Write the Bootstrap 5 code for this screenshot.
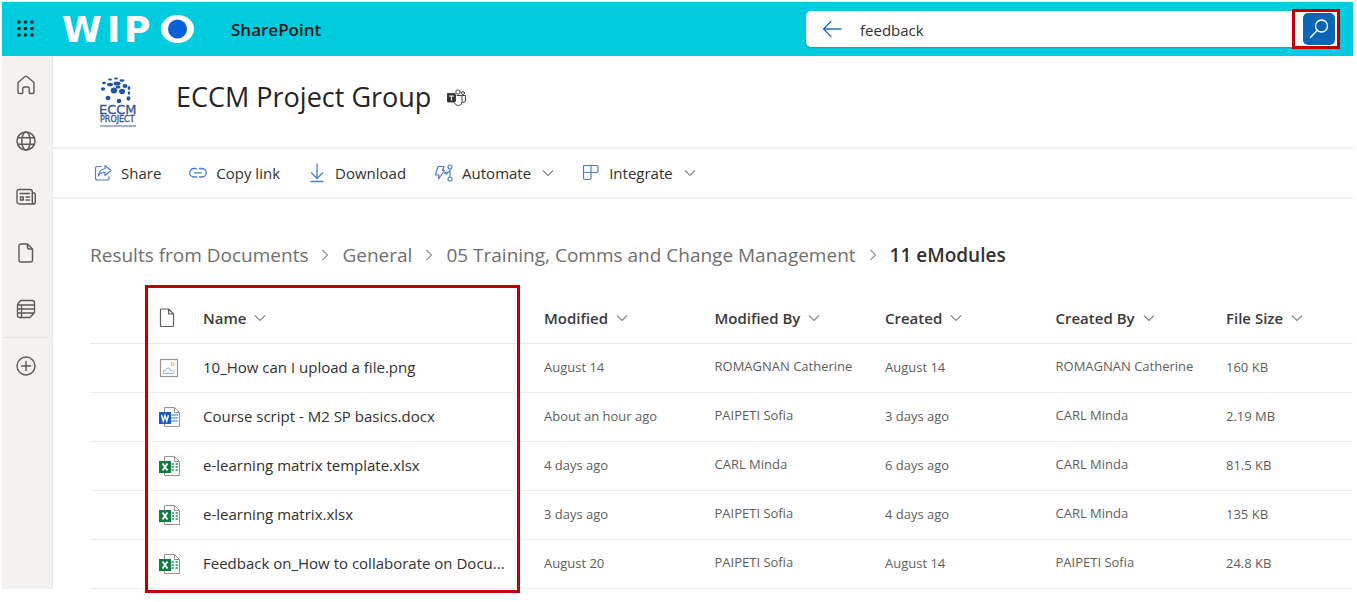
<!DOCTYPE html>
<html lang="en">
<head>
<meta charset="utf-8">
<meta name="viewport" content="width=device-width, initial-scale=1">
<title>ECCM Project Group - SharePoint</title>
<link href="https://cdn.jsdelivr.net/npm/bootstrap@5.3.0/dist/css/bootstrap.min.css" rel="stylesheet">
<style>
  body { font-family: "Open Sans", "Noto Sans", sans-serif; color: #323130; background: #fff; }
  a, a:hover { color: inherit; text-decoration: none; }
  svg { display: block; flex: none; }
  .line-art { fill: none; stroke: currentColor; stroke-linecap: round; stroke-linejoin: round; }
  .shell { padding: 2px 4px 8px 2px; }

  .suite-bar { background: #00cce0; height: 54px; padding: 0 13px 0 14px; }
  .brand-logo { margin-left: 26px; }
  .app-name { font-size: 17px; font-weight: 600; color: #1b1a19; margin-left: 35px; padding-top: 2px; }
  .search-box { background: #fff; border-radius: 5px; height: 36px; width: 534px; padding-left: 16px; box-shadow: 0 1px 2px rgba(0,0,0,.2); }
  .search-box input { border: 0; outline: 0; min-width: 0; font-size: 15px; color: #323130; background: transparent; margin-left: 18px; padding: 2px 0 0; }
  .search-mark { border: 3px solid #c00000; height: 40px; width: 48px; padding: 0 2px 0 8px; }
  .search-go { background: #0a66b5; color: #fff; width: 32px; height: 32px; border: 0; border-radius: 5px; padding: 0; }
  .icon-btn { background: none; border: 0; padding: 0; color: #1b6fc0; }

  .side-rail { width: 51px; background: #f3f2f1; border-right: 1px solid #e9e8e7; padding: 1px 3px 0 0; color: #5c5a58; }
  .side-rail a { height: 56px; display: flex; align-items: center; justify-content: center; }
  .side-rail a.rail-last { border-top: 1px solid #e6e4e2; }

  .site-head { height: 93px; border-bottom: 2px solid #f1f0ef; padding-left: 42px; }
  .site-title { font-size: 27px; font-weight: 500; color: #252423; margin: 0 16px 8px 37px; }
  .teams-mark { color: #484644; }
  .cmd-bar { height: 50px; border-bottom: 2px solid #f1f0ef; padding-left: 41px; gap: 28px; }
  .cmd { background: none; border: 0; padding: 0; font-size: 15px; color: #323130; display: flex; align-items: center; gap: 9px; }
  .cmd .cmd-icon { color: #4a80d4; }
  .cmd .chev { margin-left: 2px; }
  .chev { color: #8a8886; }

  .crumbs { font-size: 19px; color: #706e6c; padding-left: 37px; height: 86px; padding-top: 42px; }
  .crumb-list { gap: 13px; }
  .crumbs .here { font-weight: 600; color: #323130; }

  .files-wrap { margin-left: 37px; position: relative; }
  .files { table-layout: fixed; width: 100%; font-size: 13px; color: #605e5c; border-collapse: collapse; }
  .files th { height: 58px; font-size: 15px; font-weight: 600; color: #3b3a39; padding: 9px 0 0 13px; border-bottom: 1px solid #e9e8e7; white-space: nowrap; }
  .files td { height: 49px; padding: 0 0 0 13px; border-bottom: 1px solid #eeedec; white-space: nowrap; }
  .files td.person { padding-bottom: 2px; }
  .files td.fname { font-size: 15px; color: #323130; }
  .files th .chev { margin-left: 8px; }
  .type-icon { color: #605e5c; }
  .col-pick { width: 56px; } .col-type { width: 44px; } .col-name { width: 27%; } .col-info { width: 13.5%; }
  .list-mark { position: absolute; left: 55px; top: 0; bottom: -4px; width: calc(27% + 34px); border: 3px solid #c00000; pointer-events: none; }
</style>
</head>
<body>
<svg width="0" height="0" class="position-absolute" aria-hidden="true">
  <symbol id="chev" viewBox="0 0 12 12"><path d="M1 3.5l5 5 5-5" fill="none" stroke="currentColor" stroke-width="1.2"/></symbol>
  <symbol id="sep" viewBox="0 0 8 12"><path d="M1.500 1l5 5-5 5" fill="none" stroke="#979593" stroke-width="1.2"/></symbol>
  <symbol id="xlsx" viewBox="0 0 22 22">
    <path d="M5.500 1.500h10l5 5v14h-15z" fill="#fff" stroke="#979593"/><path d="M15.500 1.500v5h5" fill="none" stroke="#979593"/>
    <path d="M12.500 9h2.500m1.500 0h2.500m-6.500 3h2.500m1.500 0h2.500m-6.500 3h2.500m1.500 0h2.500" stroke="#21a366" stroke-width="1.300"/>
    <rect y="6" width="12" height="12" fill="#107c41"/><path d="M3.500 8.500l5 7m0-7l-5 7" stroke="#fff" stroke-width="1.800"/>
  </symbol>
  <symbol id="docx" viewBox="0 0 22 22">
    <path d="M5.500 1.500h10l5 5v14h-15z" fill="#fff" stroke="#979593"/><path d="M15.500 1.500v5h5" fill="none" stroke="#979593"/>
    <path d="M12 9h7M12 12h7M12 15h7" stroke="#2b7cd3" stroke-width="1.200"/>
    <rect y="6" width="12" height="12" fill="#185abd"/><path d="M2.500 9l1.700 6L6 9.500 7.800 15l1.700-6" stroke="#fff" stroke-width="1.400" fill="none"/>
  </symbol>
</svg>

<div class="shell">
  <header class="suite-bar d-flex align-items-center">
    <button class="icon-btn" type="button" aria-label="App launcher">
      <svg width="20" height="20" fill="#11282c"><circle cx="3" cy="3" r="1.800"/><circle cx="9.500" cy="3" r="1.800"/><circle cx="16" cy="3" r="1.800"/><circle cx="3" cy="9.500" r="1.800"/><circle cx="9.500" cy="9.500" r="1.800"/><circle cx="16" cy="9.500" r="1.800"/><circle cx="3" cy="16" r="1.800"/><circle cx="9.500" cy="16" r="1.800"/><circle cx="16" cy="16" r="1.800"/></svg>
    </button>
    <a href="#" class="brand-logo" aria-label="WIPO">
      <svg width="134" height="50" font-family="DejaVu Sans" font-weight="700" font-size="36" fill="#fff">
        <text y="38" x="0 45 62 99">WIPO</text>
        <ellipse cx="115.500" cy="25" rx="16.500" ry="14"/><ellipse cx="115.500" cy="25" rx="9.500" ry="9.500" fill="#0a5fd8"/>
      </svg>
    </a>
    <a href="#" class="app-name">SharePoint</a>
    <form class="search-box d-flex align-items-center ms-auto" onsubmit="return false">
      <button class="icon-btn" type="button" aria-label="Back"><svg class="line-art" width="20" height="18" stroke-width="1.300"><path d="M19 9H1.500M9 1.500L1.500 9 9 16.500"/></svg></button>
      <input class="flex-grow-1" type="text" value="feedback" aria-label="Search">
      <div class="search-mark d-flex align-items-center"><button class="search-go d-flex align-items-center justify-content-center" type="submit" aria-label="Search"><svg class="line-art" width="20" height="20" stroke-width="1.300"><circle cx="12.500" cy="7" r="6"/><path d="M8.300 11.300L1.500 18.500"/></svg></button></div>
    </form>
  </header>

  <div class="d-flex">
    <nav class="side-rail flex-shrink-0" aria-label="App bar">
      <a href="#" aria-label="Home"><svg class="line-art" width="20" height="20" stroke-width="1.400"><path d="M2 8.300Q2 7.500 2.600 7L9 1.500q1-.8 2 0L17.400 7q.6.500.6 1.300V17q0 1.500-1.500 1.500h-2.300q-1 0-1-1v-4q0-1.500-1.500-1.500H8.300q-1.500 0-1.500 1.500v4q0 1-1 1H3.500Q2 18.500 2 17z"/></svg></a>
      <a href="#" aria-label="Sites"><svg class="line-art" width="20" height="20" stroke-width="1.500"><circle cx="10" cy="10" r="9"/><ellipse cx="10" cy="10" rx="4.200" ry="9"/><path d="M2 6.800h16M2 13.200h16"/></svg></a>
      <a href="#" aria-label="News"><svg class="line-art" width="20" height="20" stroke-width="1.400"><path d="M3.500 2.500h10.500q2.300 0 2.300 2.300V14.500q0 2.500 1.500 2.500 1.500 0 1.500-2.500V7.500q0-1.500-1.500-1.500h-1.500M17.500 17h-14q-2.500 0-2.500-2.500V5q0-2.500 2.500-2.500"/><path d="M4 6.500h9.500M10 10h3.500M10 13h3.500M4.500 10h2.800v3H4.500z"/></svg></a>
      <a href="#" aria-label="Files"><svg class="line-art" width="16" height="20" stroke-width="1.400"><path d="M3 1h6.500l5 5v11q0 2-2 2H3q-2 0-2-2V3q0-2 2-2zM9.500 1v3.500q0 1.500 1.500 1.500h3.500"/></svg></a>
      <a href="#" aria-label="Lists"><svg class="line-art" width="20" height="20" stroke-width="1.400"><path d="M4.500 1.500H16q2.500 0 2.500 2.500v9.500L14 18.500H3.500q-2 0-2-2v-11zM1.500 6h17M1.500 10h17M1.500 14h16.500M5.500 6v12.500"/></svg></a>
      <a href="#" class="rail-last" aria-label="Create"><svg class="line-art" width="20" height="20" stroke-width="1.400"><circle cx="10" cy="10" r="9"/><path d="M10 5.500v9M5.500 10h9"/></svg></a>
    </nav>

    <main class="flex-grow-1" style="min-width:0">
      <div class="site-head d-flex align-items-center">
        <a href="#" aria-label="ECCM Project">
          <svg width="44" height="56" fill="#1f56a8" font-family="DejaVu Sans">
            <ellipse cx="9" cy="9" rx="2" ry="1.200"/><ellipse cx="15" cy="5.500" rx="2" ry="1"/><ellipse cx="21" cy="4.500" rx="2" ry="1"/><ellipse cx="27" cy="6.500" rx="2.500" ry="1.200"/><ellipse cx="15" cy="10.500" rx="3" ry="1.800"/><ellipse cx="22" cy="9.500" rx="3.500" ry="2"/><ellipse cx="30" cy="12" rx="2.500" ry="2"/><ellipse cx="8" cy="15" rx="2.200" ry="1.700"/><ellipse cx="19" cy="16.500" rx="3.300" ry="3"/><ellipse cx="27" cy="17.500" rx="3" ry="2.700"/><ellipse cx="34" cy="14" rx="1.400" ry="2"/><ellipse cx="13" cy="24" rx="2.500" ry="2.300"/><ellipse cx="24" cy="27" rx="2.300" ry="2.200"/><ellipse cx="33.500" cy="24.500" rx="2" ry="2.200"/><ellipse cx="34" cy="19" rx="1.300" ry="1.700"/><ellipse cx="23" cy="13" rx="2.500" ry="1.500"/>
            <g fill="#35508f" stroke="#35508f" stroke-width=".3"><text x="4" y="40" font-size="13">ECCM</text><text x="5" y="48" font-size="8">PROJECT</text></g>
            <path d="M5 52h36" stroke="#9fb0d0" stroke-width="2"/>
          </svg>
        </a>
        <h1 class="site-title">ECCM Project Group</h1>
        <svg class="line-art teams-mark mb-2" width="20" height="18" stroke-width="1"><circle cx="11" cy="3" r="2.200"/><circle cx="16" cy="4" r="1.500"/><path d="M10 6.500h5V13q0 3.500-3.500 3.500-3 0-4-2.500M15 6.500h3.500V11q0 3-3 2.500"/><rect x="0" y="4.500" width="8.500" height="8.500" rx="1" fill="#323130"/><path d="M2.500 7h4M4.500 7v4" stroke="#fff" stroke-width="1.200"/></svg>
      </div>

      <div class="cmd-bar d-flex align-items-center" role="toolbar" aria-label="Document actions">
        <button class="cmd" type="button"><svg class="line-art cmd-icon" width="18" height="18" stroke-width="1.200"><path d="M7 2.500H3.500q-2 0-2 2V14q0 2 2 2h9.500q2 0 2-2v-1.500M11 1.500l6 5-6 5V8.500Q7 8 4.500 12 5 5.500 11 4.500z"/></svg>Share</button>
        <button class="cmd" type="button"><svg class="line-art cmd-icon" width="18" height="18" stroke-width="1.300"><path d="M7.500 4.500H5a4.200 4.200 0 0 0 0 8.500h2.500M10.500 4.500H13a4.200 4.200 0 0 1 0 8.500h-2.500M5.500 8.800h7"/></svg>Copy link</button>
        <button class="cmd" type="button"><svg class="line-art cmd-icon" width="18" height="20" stroke-width="1.300"><path d="M9 1v14M3.500 10L9 15.500l5.500-5.500M3 18.500h12"/></svg>Download</button>
        <button class="cmd" type="button"><svg class="line-art cmd-icon" width="19" height="18" stroke-width="1.200"><path d="M4 2.500h6L8.500 6.500h2L4.500 15l.5-4H1.500zM10.500 9h3M16 5v8M13 9l3-2"/><circle cx="16" cy="3" r="2"/><circle cx="16" cy="15" r="2"/><circle cx="12" cy="9" r="1"/></svg>Automate<svg class="chev" width="12" height="12"><use href="#chev"/></svg></button>
        <button class="cmd" type="button"><svg class="line-art cmd-icon" width="18" height="18" stroke-width="1.200"><path d="M2.500 1.500h12.500q1 0 1 1v5q0 1-1 1H1.500V2.500q0-1 1-1zM1.500 8.500V14q0 1.500 1.500 1.500h4.500q1.500 0 1.500-1.500V1.500"/></svg>Integrate<svg class="chev" width="12" height="12"><use href="#chev"/></svg></button>
      </div>

      <nav class="crumbs d-flex align-items-start text-nowrap" aria-label="Breadcrumb">
        <div class="crumb-list d-flex align-items-center">
          <a href="#">Results from Documents</a><svg width="8" height="12"><use href="#sep"/></svg>
          <a href="#">General</a><svg width="8" height="12"><use href="#sep"/></svg>
          <a href="#">05 Training, Comms and Change Management</a><svg width="8" height="12"><use href="#sep"/></svg>
          <span class="here" aria-current="page">11 eModules</span>
        </div>
      </nav>

      <div class="files-wrap">
        <table class="files">
          <colgroup><col class="col-pick"><col class="col-type"><col class="col-name"><col class="col-info"><col class="col-info"><col class="col-info"><col class="col-info"><col></colgroup>
          <thead><tr>
            <th></th>
            <th scope="col" aria-label="File type"><svg class="line-art type-icon" width="16" height="20" stroke-width="1.200"><path d="M2.500 1h7l5 5v11.500q0 1-1 1h-11q-1 0-1-1V2q0-1 1-1zM9.500 1v5h5"/></svg></th>
            <th scope="col"><div class="d-flex align-items-center">Name<svg class="chev" width="12" height="12"><use href="#chev"/></svg></div></th>
            <th scope="col"><div class="d-flex align-items-center">Modified<svg class="chev" width="12" height="12"><use href="#chev"/></svg></div></th>
            <th scope="col"><div class="d-flex align-items-center">Modified By<svg class="chev" width="12" height="12"><use href="#chev"/></svg></div></th>
            <th scope="col"><div class="d-flex align-items-center">Created<svg class="chev" width="12" height="12"><use href="#chev"/></svg></div></th>
            <th scope="col"><div class="d-flex align-items-center">Created By<svg class="chev" width="12" height="12"><use href="#chev"/></svg></div></th>
            <th scope="col"><div class="d-flex align-items-center">File Size<svg class="chev" width="12" height="12"><use href="#chev"/></svg></div></th>
          </tr></thead>
          <tbody>
            <tr><td></td><td><svg width="20" height="20" fill="none"><rect x="1.500" y="1.500" width="17" height="17" stroke="#979593" stroke-width="1.200"/><circle cx="13.500" cy="6" r="1.500" stroke="#f2a93b"/><path d="M4.500 15.500q-1-1.500.5-3h1.500q1-3.500 3.500-2.500 1.500 1 1.500 2.500 2-1.500 3.500 1 .5 1-.5 2z" stroke="#8ab4de"/></svg></td><td class="fname"><a href="#">10_How can I upload a file.png</a></td><td>August 14</td><td class="person">ROMAGNAN Catherine</td><td>August 14</td><td class="person">ROMAGNAN Catherine</td><td>160 KB</td></tr>
            <tr><td></td><td><svg width="22" height="22"><use href="#docx"/></svg></td><td class="fname"><a href="#">Course script - M2 SP basics.docx</a></td><td>About an hour ago</td><td class="person">PAIPETI Sofia</td><td>3 days ago</td><td class="person">CARL Minda</td><td>2.19 MB</td></tr>
            <tr><td></td><td><svg width="22" height="22"><use href="#xlsx"/></svg></td><td class="fname"><a href="#">e-learning matrix template.xlsx</a></td><td>4 days ago</td><td class="person">CARL Minda</td><td>6 days ago</td><td class="person">CARL Minda</td><td>81.5 KB</td></tr>
            <tr><td></td><td><svg width="22" height="22"><use href="#xlsx"/></svg></td><td class="fname"><a href="#">e-learning matrix.xlsx</a></td><td>3 days ago</td><td class="person">PAIPETI Sofia</td><td>4 days ago</td><td class="person">CARL Minda</td><td>135 KB</td></tr>
            <tr><td></td><td><svg width="22" height="22"><use href="#xlsx"/></svg></td><td class="fname"><a href="#">Feedback on_How to collaborate on Docu...</a></td><td>August 20</td><td class="person">PAIPETI Sofia</td><td>August 14</td><td class="person">PAIPETI Sofia</td><td>24.8 KB</td></tr>
          </tbody>
        </table>
        <div class="list-mark"></div>
      </div>
    </main>
  </div>
</div>
<script src="https://cdn.jsdelivr.net/npm/bootstrap@5.3.0/dist/js/bootstrap.bundle.min.js"></script>
</body>
</html>
